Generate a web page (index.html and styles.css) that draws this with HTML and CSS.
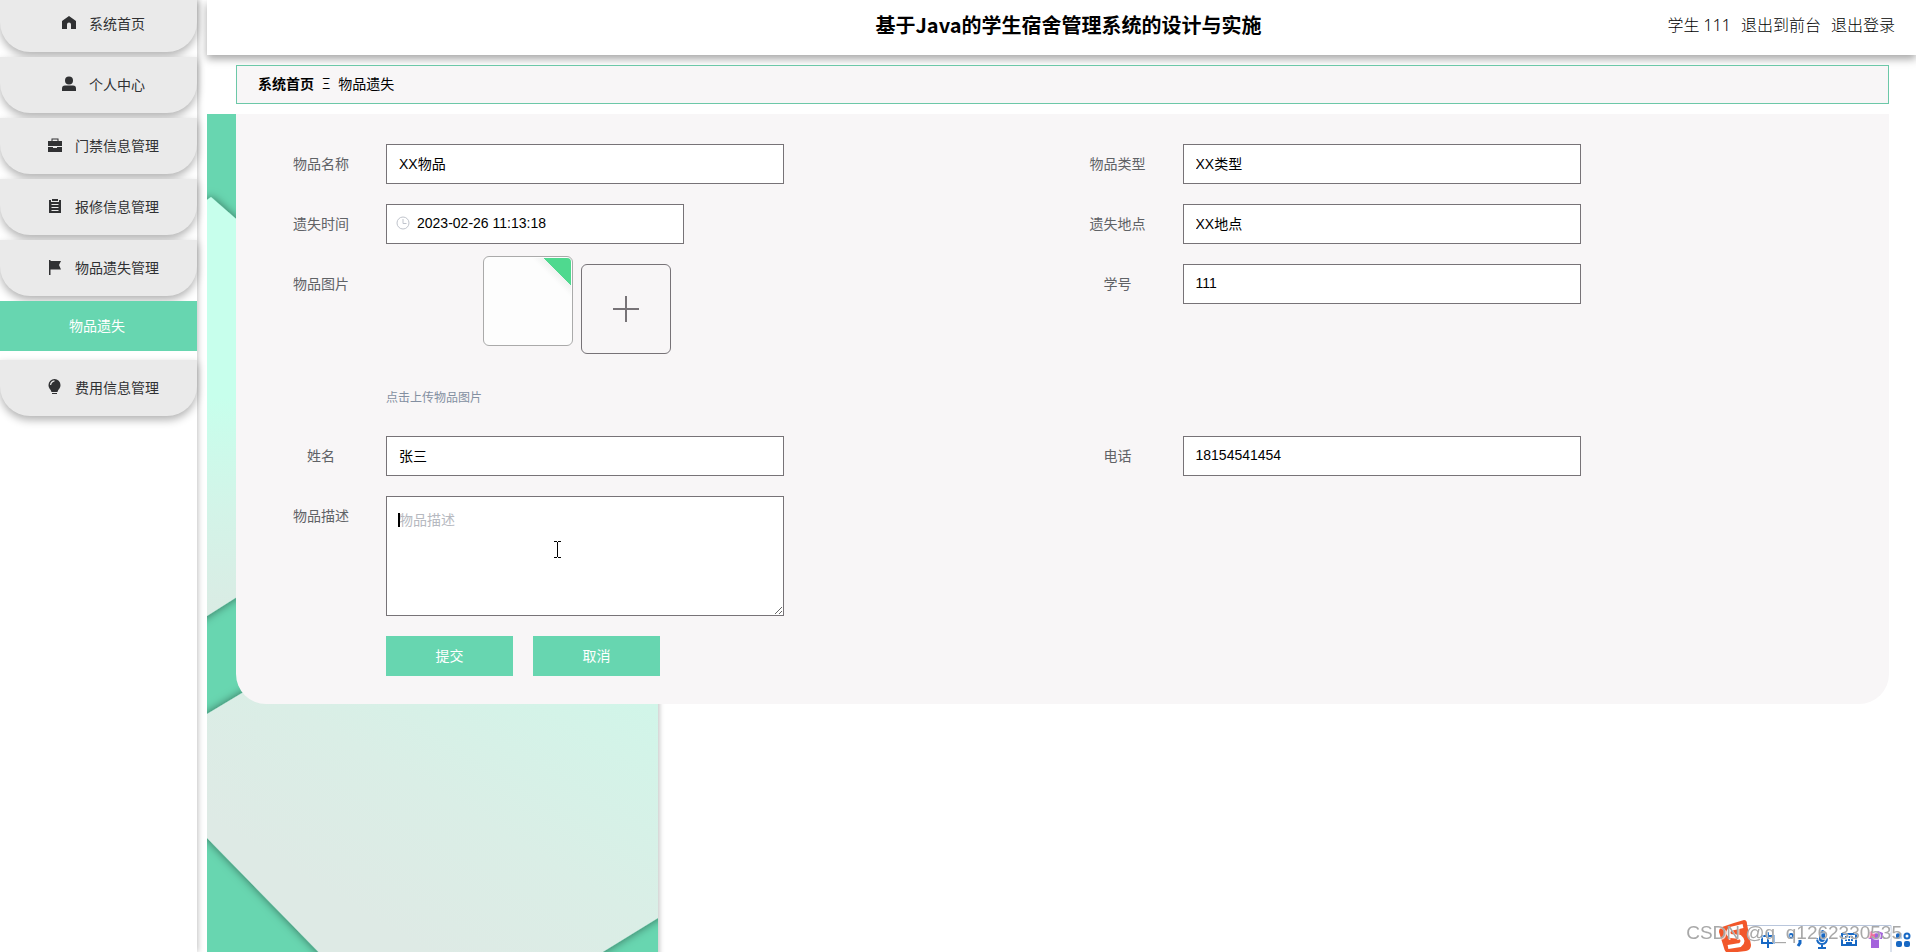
FILE: index.html
```html
<!DOCTYPE html>
<html lang="zh-CN">
<head>
<meta charset="utf-8">
<title>基于Java的学生宿舍管理系统的设计与实施</title>
<link rel="stylesheet" href="styles.css">
</head>
<body>
<div class="app">
  <nav class="sidebar">
    <ul class="menu">
      <li><a class="menu-item" href="#"><svg class="icon" viewBox="0 0 14 14"><path d="M7 0 14 5v8H9V8.500a2 2 0 0 0-4 0V13H0V5z"/></svg>系统首页</a></li>
      <li><a class="menu-item" href="#"><svg class="icon" viewBox="0 0 14 14"><circle cx="7" cy="3.500" r="4"/><path d="M0 14v-2.500Q0 8.500 3 8.500h8q3 0 3 3V14z"/></svg>个人中心</a></li>
      <li><a class="menu-item" href="#"><svg class="icon" viewBox="0 0 14 14"><path fill-rule="evenodd" d="M3.500 3V.500h7V3H14v5H0V3zm1 0h5V1.500h-5zM0 9h5v1h4V9h5v5H0z"/></svg>门禁信息管理</a></li>
      <li><a class="menu-item" href="#"><svg class="icon" viewBox="0 0 14 14"><path fill-rule="evenodd" d="M1 1h2v2h8V1h2v13H1zM4 0h6v2H4zM3.500 5v1h7V5zm0 3v1h7V8zm0 3v1h7v-1z"/></svg>报修信息管理</a></li>
      <li><a class="menu-item" href="#"><svg class="icon" viewBox="0 0 14 14"><path d="M1 0h1.500v1H13l-2 4 2 4.500H2.500V15H1z"/></svg>物品遗失管理</a></li>
    </ul>
    <a class="submenu-item" href="#">物品遗失</a>
    <ul class="menu">
      <li><a class="menu-item" href="#"><svg class="icon" viewBox="0 0 14 14"><path fill-rule="evenodd" d="M6.500-1a6 6 0 0 1 6 6c0 3.500-2.500 4.500-3 7h-6C3 9.500.500 8.500.500 5a6 6 0 0 1 6-6zM2 5h1.200q.3-3 3.300-3.500V.300Q2.300.700 2 5zM4 13h5v1H4z"/></svg>费用信息管理</a></li>
    </ul>
  </nav>

  <div class="main">
    <header class="header">
      <h1 class="title">基于Java的学生宿舍管理系统的设计与实施</h1>
      <div class="user"><span>学生 111</span><a href="#">退出到前台</a><a href="#">退出登录</a></div>
    </header>
    <div class="breadcrumb"><a href="#">系统首页</a><span>Ξ</span><span>物品遗失</span></div>

    <main class="content">
      <svg class="backdrop" width="462" height="838" viewBox="0 0 462 838">
        <defs>
          <linearGradient id="g1" x1="0" y1="0" x2="0" y2="1"><stop offset=".45" stop-color="#c7ffec"/><stop offset=".7" stop-color="#d3f4e8"/><stop offset="1" stop-color="#dce9e3"/></linearGradient>
          <linearGradient id="g2" gradientUnits="userSpaceOnUse" x1="400" y1="540" x2="220" y2="838"><stop offset="0" stop-color="#d0f6e9"/><stop offset=".6" stop-color="#daeee6"/><stop offset="1" stop-color="#deeae5"/></linearGradient>
          <filter id="shade" x="-10%" y="-10%" width="120%" height="120%"><feDropShadow dx="0" dy="0" stdDeviation="5" flood-color="#000" flood-opacity=".5"/></filter>
          <filter id="edge" x="-10%" y="-10%" width="120%" height="120%"><feDropShadow dx="2" dy="0" stdDeviation="2" flood-color="#000" flood-opacity=".2"/></filter>
          <clipPath id="page"><rect width="451" height="838"/></clipPath>
        </defs>
        <rect width="451" height="900" fill="#67d6b0" filter="url(#edge)"/>
        <g clip-path="url(#page)">
          <path fill="url(#g1)" filter="url(#shade)" d="M-40 115 4 83 90 158V445L0 502-40 530z"/>
          <path fill="url(#g2)" filter="url(#shade)" d="M-60 636 0 600 200 480H520V762L451 804 360 860H133L0 724-60 664z"/>
        </g>
      </svg>
      <form class="panel">
        <div class="field"><label for="name">物品名称</label><input class="control" id="name" value="XX物品"></div>
        <div class="field"><label for="type">物品类型</label><input class="control" id="type" value="XX类型"></div>
        <div class="field"><label for="time">遗失时间</label>
          <div class="control date"><svg viewBox="0 0 14 14"><circle cx="7" cy="7" r="6"/><path d="M7 3v4.500h3.500"/></svg><input id="time" value="2023-02-26 11:13:18"></div></div>
        <div class="field"><label for="place">遗失地点</label><input class="control" id="place" value="XX地点"></div>
        <div class="field upload-field"><label for="add">物品图片</label>
          <div class="upload">
            <div class="tiles">
              <div class="thumb"></div>
              <button class="add" id="add" type="button" aria-label="添加图片"><svg viewBox="0 0 26 26"><path d="M13 0v26M0 13h26"/></svg></button>
            </div>
            <p class="tip">点击上传物品图片</p>
          </div></div>
        <div class="field"><label for="number">学号</label><input class="control" id="number" value="111"></div>
        <div class="field"><label for="person">姓名</label><input class="control" id="person" value="张三"></div>
        <div class="field"><label for="phone">电话</label><input class="control" id="phone" value="18154541454"></div>
        <div class="field wide"><label for="desc">物品描述</label>
          <div class="area"><textarea id="desc" placeholder="物品描述"></textarea><i class="caret"></i>
            <svg class="pointer" viewBox="0 0 7 17"><path d="M0 .500h3M4 .500h3M3.500 1v15M0 16.500h3M4 16.500h3"/></svg></div></div>
        <div class="actions"><button type="button">提交</button><button type="button">取消</button></div>
      </form>
    </main>
  </div>
</div>

<div class="ime">
  <svg viewBox="0 0 172 28" width="172" height="28">
    <path d="M22 1.500h149V28" fill="none" stroke="#b9c6dc"/>
    <path d="M2 3Q13-1 24-4q3 0 3 4l4 21q0 5-5 6l-17 2q-4 0-5-5L-1 8q0-4 3-5z" fill="#f2572a"/>
    <path d="M23 2 10 5q-4 5 1 7l9 1q5 4 0 8l-12 2" fill="none" stroke="#fff" stroke-width="4"/>
    <g fill="none" stroke="#1768c4" stroke-width="2"><path d="M42 12h12v7H42zM48 8v16"/><circle cx="71" cy="12" r="2"/><path d="M80 16v3l-2 3" stroke-width="3"/><path d="M97 14q0 6 5 6t5-6M102 20v4M98 24h8"/><rect x="122" y="10" width="14" height="11"/><path d="M125 13h2m1 0h2m1 0h2m-8 3h2m1 0h2m1 0h2m-7 3h6"/></g>
    <rect x="99" y="6" width="6" height="12" rx="3" fill="#1768c4"/>
    <path d="m148 9 4-2q3 3 6 0l5 2-1 6h-3v9h-8v-9h-3z" fill="#a463dc"/><path d="m148 9 4-2 3 2v5h-7z" fill="#ee6a9b"/>
  </svg>
  <svg class="grid-icon" viewBox="0 0 15 15" width="15" height="15"><rect width="6" height="6" rx="2"/><circle cx="11" cy="3" r="2.500" fill="none" stroke="#1768c4" stroke-width="2"/><rect y="8" width="6" height="6" rx="2"/><rect x="8" y="8" width="6" height="6" rx="2"/></svg>
</div>
<div class="watermark">CSDN @q_q1262330535</div>
</body>
</html>
```
FILE: styles.css
```css
* { box-sizing: border-box; }

body {
  margin: 0;
  background: #fff;
  color: #000;
  font: 14px/20px "Noto Sans CJK SC", sans-serif;
}

a { color: inherit; text-decoration: none; }

.app {
  display: flex;
  height: 100vh;
  overflow: hidden;
}

/* Sidebar */
.sidebar {
  flex: 0 0 197px;
  margin-right: 10px;
  box-shadow: 1px 0 6px rgba(0, 0, 0, .25);
}

.menu {
  display: flex;
  flex-direction: column;
  gap: 5px;
  margin: 0;
  padding: 0;
  list-style: none;
}

.menu:first-child { margin-top: -4px; }

.menu-item {
  display: flex;
  align-items: center;
  justify-content: center;
  gap: 13px;
  height: 56px;
  padding: 0 0 2px 10px;
  border-radius: 0 0 30px 30px;
  background: #eaeaea;
  box-shadow: 0 4px 8px rgba(0, 0, 0, .3);
  color: #303133;
}

.icon {
  width: 14px;
  height: 14px;
  overflow: visible;
  fill: #303133;
}

.submenu-item {
  position: relative;
  display: flex;
  align-items: center;
  height: 50px;
  margin: 5px 0 9px;
  padding: 0 0 2px 69px;
  background: #67d6b0;
  color: #fff;
}

/* Header */
.main {
  flex: 1;
  display: flex;
  flex-direction: column;
  min-width: 0;
}

.header {
  display: grid;
  grid-template-columns: 1fr auto 1fr;
  align-items: center;
  height: 55px;
  padding: 0 21px 6px 35px;
  background: #fff;
  box-shadow: 0 4px 8px rgba(0, 0, 0, .35);
}

.title {
  grid-column: 2;
  margin: 0;
  font-size: 20px;
  line-height: 28px;
  font-weight: 700;
}

.user {
  display: flex;
  justify-content: flex-end;
  gap: 10px;
  font-family: "Noto Sans", "Noto Sans CJK SC", sans-serif;
  font-size: 16px;
  font-weight: 300;
}

.breadcrumb {
  display: flex;
  align-items: center;
  gap: 8px;
  height: 39px;
  margin: 10px 27px 10px 29px;
  padding: 0 21px 3px;
  border: 1px solid #6cc8a8;
  background: #f8f6f7;
}

.breadcrumb a { font-weight: 700; }

/* Content */
.content {
  position: relative;
  flex: 1;
  padding: 0 27px 0 29px;
}

.backdrop {
  position: absolute;
  top: 0;
  left: 0;
}

.panel {
  position: relative;
  display: grid;
  grid-template-columns: 1fr 1fr;
  row-gap: 20px;
  padding: 30px 30px 28px;
  border-radius: 0 0 30px 30px;
  background: #f8f6f7;
}

.field {
  display: flex;
  gap: 10px;
}

.field label {
  flex: 0 0 110px;
  color: #606266;
  line-height: 38px;
  text-align: center;
}

.control,
.area textarea {
  height: 40px;
  padding: 0 12px 2px;
  border: 1px solid #777377;
  border-radius: 0;
  background: #fff;
  color: #000;
  font: 14px/20px "Liberation Sans", "Noto Sans CJK SC", sans-serif;
}

.control {
  flex: 0 0 50%;
  min-width: 0;
}

.date {
  display: flex;
  align-items: center;
  gap: 7px;
  flex-basis: 298px;
  padding: 0 9px 2px;
}

.date svg {
  width: 14px;
  height: 14px;
  fill: none;
  stroke: #c0c4cc;
}

.date input {
  flex: 1;
  min-width: 0;
  padding: 0;
  border: 0;
  background: none;
  color: inherit;
  font: inherit;
}

.upload-field { height: 152px; }

.upload {
  display: flex;
  flex-direction: column;
  justify-content: space-between;
}

.tiles {
  display: flex;
  gap: 8px;
  padding-left: 97px;
}

.thumb,
.add {
  width: 90px;
  height: 90px;
  border: 1px solid #777377;
  border-radius: 6px;
}

.thumb {
  margin-top: -8px;
  padding: 1px;
  border-color: #aaa;
  background:
    linear-gradient(45deg, #fdfdfd 77%, #f0f2f1 84%, #4fd98f 84%) content-box,
    #fdfdfd;
}

.add {
  display: grid;
  place-items: center;
  padding: 0;
  background: none;
}

.add svg {
  width: 26px;
  height: 26px;
  stroke: #777377;
  stroke-width: 2;
}

.tip {
  margin: 0;
  padding-bottom: 9px;
  color: #838fa1;
  font-size: 12px;
}

.wide { grid-column: 1; }

.area {
  position: relative;
  display: flex;
  flex: 0 0 50%;
}

.area textarea {
  width: 100%;
  height: 120px;
  padding: 13px 12px;
}

.area textarea::placeholder { color: #b6b9c0; }

.caret {
  position: absolute;
  top: 17px;
  left: 12px;
  width: 2px;
  height: 14px;
  background: #000;
}

.pointer {
  position: absolute;
  top: 45px;
  left: 168px;
  width: 7px;
  height: 17px;
  fill: none;
  stroke: #000;
}

.actions {
  grid-column: 1;
  display: flex;
  gap: 20px;
  padding-left: 120px;
}

.actions button {
  width: 127px;
  height: 40px;
  padding: 0 0 3px;
  border: 0;
  background: #67d6b0;
  color: #fff;
  font: 14px/20px "Noto Sans CJK SC", sans-serif;
}

/* Input-method bar and watermark lie over the page corner */
.ime {
  position: fixed;
  right: 0;
  bottom: 0;
  display: flex;
  align-items: flex-end;
  width: 196px;
  height: 27px;
}

.ime svg { flex: none; overflow: visible; }

.ime .grid-icon {
  margin: 0 0 4px 4px;
  fill: #1768c4;
}

.watermark {
  position: fixed;
  right: 14px;
  bottom: 7px;
  color: #a8a8a8;
  font: 19px/24px "Liberation Sans", sans-serif;
  text-shadow: 1px 1px 0 rgba(255, 255, 255, .7);
}
```
